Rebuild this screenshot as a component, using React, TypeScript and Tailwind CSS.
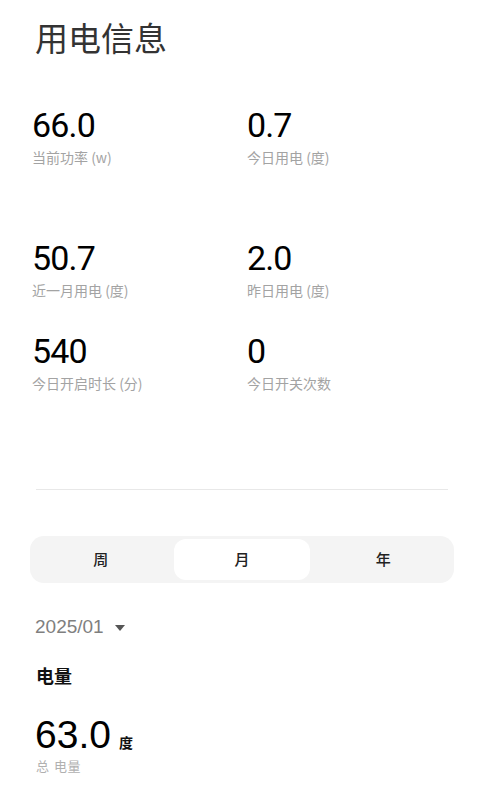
const stats = [
  { val: '66.0', lbl: '当前功率 (w)' },
  { val: '0.7', lbl: '今日用电 (度)' },
  { val: '50.7', lbl: '近一月用电 (度)' },
  { val: '2.0', lbl: '昨日用电 (度)' },
  { val: '540', lbl: '今日开启时长 (分)' },
  { val: '0', lbl: '今日开关次数' },
]

const tabs = ['周', '月', '年']

function Stat({ val, lbl }: { val: string; lbl: string }) {
  return (
    <div>
      <p className="text-[34px] leading-none tracking-tight text-black font-['Roboto','Noto_Sans_CJK_SC',sans-serif]">
        {val}
      </p>
      <p className="mt-[7px] text-[14px] leading-[16px] text-[#a3a3a3] font-['Noto_Sans_CJK_SC',sans-serif]">{lbl}</p>
    </div>
  )
}

export default function App() {
  return (
    <div className="w-[484px] h-[800px] bg-white overflow-hidden font-['Noto_Sans_CJK_SC',sans-serif]">
      <h1 className="pl-[35px] pt-[17px] text-[33px] leading-[40px] text-[#333]">用电信息</h1>

      <div className="mt-[51px] pl-[32px]">
        <div className="grid grid-cols-[215px_1fr]">
          <Stat {...stats[0]} />
          <Stat {...stats[1]} />
        </div>
        <div className="mt-[76px] grid grid-cols-[215px_1fr]">
          <Stat {...stats[2]} />
          <Stat {...stats[3]} />
        </div>
        <div className="mt-[36px] grid grid-cols-[215px_1fr]">
          <Stat {...stats[4]} />
          <Stat {...stats[5]} />
        </div>
      </div>

      <div className="mt-[98px] mx-[36px] h-px bg-[#e8e8e8]" />

      <div className="mt-[46px] mx-[30px] h-[47px] rounded-[14px] bg-[#f4f4f4] p-[3px] grid grid-cols-3 gap-[6px]">
        {tabs.map((t) => (
          <div
            key={t}
            className={
              t === '月'
                ? 'flex items-center justify-center rounded-[12px] bg-white text-[15px] font-medium text-[#222]'
                : 'flex items-center justify-center text-[15px] font-medium text-[#222]'
            }
          >
            {t}
          </div>
        ))}
      </div>

      <div className="mt-[32px] pl-[35px] flex items-center gap-[11px]">
        <span className="text-[19px] leading-[24px] text-[#7f7f7f] font-['Liberation_Sans',sans-serif]">2025/01</span>
        <svg width="10" height="6" viewBox="0 0 10 6" className="mt-[1px]">
          <path d="M0 0 L10 0 L5 6 Z" fill="#555" />
        </svg>
      </div>

      <p className="mt-[24px] pl-[36px] text-[18px] leading-[24px] font-bold text-[#111]">电量</p>

      <div className="mt-[26px] pl-[35px] flex items-baseline gap-[8px]">
        <span className="text-[39px] leading-[44px] text-black font-['Liberation_Sans',sans-serif]">63.0</span>
        <span className="text-[14px] leading-[16px] font-bold text-[#111]">度</span>
      </div>
      <p className="mt-[2px] pl-[36px] text-[13px] leading-[15px] text-[#b0b0b0] tracking-[0.05em] font-['Liberation_Sans','Noto_Sans_CJK_SC',sans-serif]">
        总 电量
      </p>
    </div>
  )
}
